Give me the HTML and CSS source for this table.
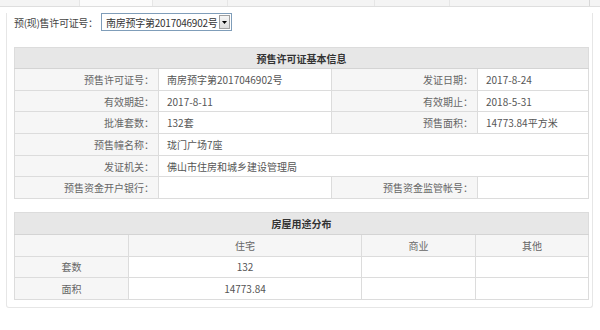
FILE: index.html
```html
<!DOCTYPE html>
<html lang="zh-CN">
<head>
<meta charset="utf-8">
<link rel="stylesheet" href="styles.css">
</head>
<body>
<div class="tabstrip">
  <div class="tab t1"></div>
  <div class="tab t2 active"></div>
  <div class="tab t3"></div>
  <div class="tab t4"></div>
  <div class="tab t5"></div>
  <div class="tab t6"></div>
</div>
<div class="panel">
  <div class="toolbar">
    <span class="tb-label">预(现)售许可证号：</span>
    <div class="select">
      <span class="select-text">南房预字第2017046902号</span>
      <span class="select-btn"><svg width="5" height="3" viewBox="0 0 5 3"><path d="M0 0H5L2.5 3Z" fill="#000"/></svg></span>
    </div>
  </div>

  <table class="info t-basic">
    <colgroup><col class="c1"><col class="c2"><col class="c3"><col class="c4"></colgroup>
    <tr class="head"><th colspan="4">预售许可证基本信息</th></tr>
    <tr><td class="lbl">预售许可证号：</td><td class="val">南房预字第2017046902号</td><td class="lbl">发证日期：</td><td class="val">2017-8-24</td></tr>
    <tr><td class="lbl">有效期起：</td><td class="val">2017-8-11</td><td class="lbl">有效期止：</td><td class="val">2018-5-31</td></tr>
    <tr><td class="lbl">批准套数：</td><td class="val">132套</td><td class="lbl">预售面积：</td><td class="val">14773.84平方米</td></tr>
    <tr><td class="lbl">预售幢名称：</td><td class="val" colspan="3">珑门广场7座</td></tr>
    <tr><td class="lbl">发证机关：</td><td class="val" colspan="3">佛山市住房和城乡建设管理局</td></tr>
    <tr><td class="lbl">预售资金开户银行：</td><td class="val"></td><td class="lbl">预售资金监管帐号：</td><td class="val"></td></tr>
  </table>

  <table class="info t-use">
    <colgroup><col class="d1"><col class="d2"><col class="d3"><col class="d4"></colgroup>
    <tr class="head"><th colspan="4">房屋用途分布</th></tr>
    <tr class="sub"><td class="gray"></td><td class="gray">住宅</td><td class="gray">商业</td><td class="gray">其他</td></tr>
    <tr><td class="gray">套数</td><td class="cv">132</td><td class="cv"></td><td class="cv"></td></tr>
    <tr><td class="gray">面积</td><td class="cv">14773.84</td><td class="cv"></td><td class="cv"></td></tr>
  </table>
</div>
</body>
</html>
```
FILE: styles.css
```css
* { box-sizing: border-box; }
html, body { margin: 0; padding: 0; background: #fff; }
body {
  font-family: "Noto Sans CJK SC", "Noto Sans", sans-serif;
  font-size: 10px;
  color: #555;
  width: 600px;
  height: 330px;
  overflow: hidden;
}
.tabstrip {
  display: flex;
  height: 7px;
  border-bottom: 1px solid #dedede;
  background: #f4f4f4;
}
.tab { height: 6px; border-right: 1px solid #e6e6e6; }
.t1 { width: 80px; }
.t2 { width: 73px; }
.t2.active { background: #fbfbfb; }
.t3 { width: 75px; }
.t4 { width: 147px; }
.t5 { width: 75px; }
.t6 { width: 140px; border-right: 1px solid #d8d8d8; }

.panel {
  margin-left: 6px;
  width: 587px;
  border: 1px solid #e6e6e6;
  border-top: 0;
  border-radius: 0 0 3px 3px;
  padding: 0 4px 7px 7px;
}
.toolbar {
  display: flex;
  align-items: center;
  height: 18px;
  margin-top: 6px;
}
.tb-label {
  color: #444;
  width: 87px;
  flex: none;
  white-space: nowrap;
  letter-spacing: -0.3px;
}
.select {
  display: flex;
  align-items: center;
  width: 131px;
  height: 18px;
  border: 1px solid #7f9db9;
  padding: 0 1px 0 4px;
  background: #fff;
  flex: none;
}
.select-text {
  flex: 1;
  color: #333;
  white-space: nowrap;
  overflow: hidden;
  letter-spacing: -0.25px;
}
.select-btn {
  flex: none;
  display: flex;
  align-items: center;
  justify-content: center;
  width: 11px;
  height: 14px;
  border: 1px solid #a0a0a0;
  background: linear-gradient(#f6f6f6, #dcdcdc);
}

table.info {
  width: 574px;
  border-collapse: collapse;
  table-layout: fixed;
}
.t-basic { margin-top: 16px; }
.t-use { margin-top: 13px; }
.info td, .info th {
  border: 1px solid #dcdcdc;
  padding: 0;
  white-space: nowrap;
}
.info tr { height: 21.7px; }
.info tr.head { height: 21px; }
.t-use tr { height: 21.5px; }
.t-use tr.head { height: 22px; }
.info th {
  background: #e7e7e7;
  color: #333;
  font-weight: bold;
  text-align: center;
  border-bottom: 1px solid #d4d4d4;
}
.c1 { width: 144px; }
.c2 { width: 173px; }
.c3 { width: 146px; }
.c4 { width: 111px; }
.d1 { width: 114px; }
.d2 { width: 233px; }
.d3 { width: 114px; }
.d4 { width: 113px; }
.lbl {
  background: #f6f6f6;
  text-align: right;
  padding-right: 4px !important;
  color: #666;
}
.val {
  background: #fff;
  text-align: left;
  padding-left: 8px !important;
  color: #555;
}
.gray { background: #f6f6f6; text-align: center; color: #666; }
.cv { background: #fff; text-align: center; color: #555; }
```
